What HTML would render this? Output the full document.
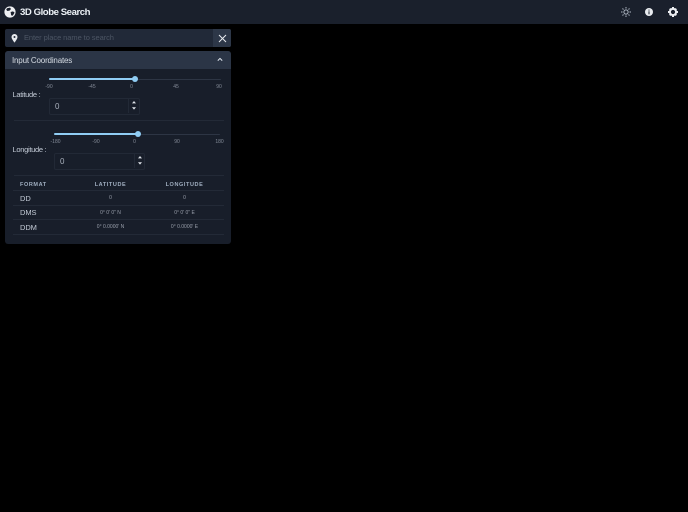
<!DOCTYPE html>
<html>
<head>
<meta charset="utf-8">
<style>
html,body{margin:0;padding:0;width:688px;height:512px;overflow:hidden;background:#000;font-family:"Liberation Sans",sans-serif;}
.a{position:absolute;white-space:nowrap;}
.sc{font-size:5px;color:#858c99;transform:translateX(-50%);line-height:6px;}
.cell{font-size:5px;color:#989eaa;transform:translateX(-50%);line-height:6px;}
.th{font-size:5.5px;color:#a0aec0;letter-spacing:.6px;line-height:7px;font-weight:bold;}
.f{font-size:7.5px;color:#c3cbd6;line-height:9px;left:20px;letter-spacing:-.1px;}
.hr{position:absolute;height:1px;background:#232a37;}
</style>
</head>
<body>
<div class="a" style="left:0;top:0;width:688px;height:24px;background:#1a202c;"></div>
<svg class="a" style="left:4px;top:6px" width="12" height="12" viewBox="0 0 12 12"><circle cx="6" cy="6" r="5.6" fill="#eef0f3"/><path d="M3 2.2 L6 1.6 L7 3 L5.6 4.6 L3.4 5 L2.2 3.8Z M6.6 6 L9 5.4 L10.6 6.6 L8.8 9.6 L7.2 9.4Z" fill="#1a202c"/></svg>
<div class="a" style="left:20px;top:6px;font-size:9.6px;line-height:13px;font-weight:bold;color:#edf2f7;letter-spacing:-.45px;">3D Globe Search</div>
<svg class="a" style="left:621px;top:7px" width="10" height="10" viewBox="0 0 10 10" fill="none" stroke="#aeb6c2" stroke-width="1"><circle cx="5" cy="5" r="2.1"/><path d="M5 0V1.5M5 8.5V10M0 5H1.5M8.5 5H10M1.5 1.5L2.5 2.5M7.5 7.5L8.5 8.5M1.5 8.5L2.5 7.5M7.5 2.5L8.5 1.5"/></svg>
<svg class="a" style="left:645px;top:8px" width="8" height="8" viewBox="0 0 8 8"><circle cx="4" cy="4" r="4" fill="#e8ebef"/><rect x="3.5" y="3.3" width="1" height="3" fill="#1a202c"/><rect x="3.5" y="1.6" width="1" height="1" fill="#1a202c"/></svg>
<svg class="a" style="left:668px;top:7px" width="10" height="10" viewBox="0 0 10 10"><circle cx="5" cy="5" r="3.1" fill="none" stroke="#eef0f3" stroke-width="2"/><path d="M5 5M4 0H6V2H4ZM4 8H6V10H4ZM0 4H2V6H0ZM8 4H10V6H8ZM1 2.4L2.4 1L3.6 2.2L2.2 3.6ZM7.6 1L9 2.4L7.8 3.6L6.4 2.2ZM1 7.6L2.2 6.4L3.6 7.8L2.4 9ZM7.8 6.4L9 7.6L7.6 9L6.4 7.8Z" fill="#eef0f3"/></svg>

<!-- search -->
<div class="a" style="left:5px;top:29px;width:226px;height:18px;background:#212938;border-radius:2px;"></div>
<div class="a" style="left:213px;top:29px;width:18px;height:18px;background:#2d3748;border-radius:0 2px 2px 0;"></div>
<svg class="a" style="left:11px;top:34px" width="7" height="9" viewBox="0 0 7 9"><path d="M3.5 0A3 3 0 0 0 .5 3C.5 5 3.5 8.6 3.5 8.6S6.5 5 6.5 3A3 3 0 0 0 3.5 0Z" fill="#e8ebef"/><circle cx="3.5" cy="3" r="1" fill="#212938"/></svg>
<div class="a" style="left:24px;top:33px;font-size:7.5px;line-height:10px;color:#4c5564;letter-spacing:-.07px;">Enter place name to search</div>
<svg class="a" style="left:218px;top:34px" width="9" height="9" viewBox="0 0 9 9"><path d="M1 1L8 8M8 1L1 8" stroke="#e8ebef" stroke-width="1"/></svg>

<!-- panel -->
<div class="a" style="left:5px;top:51px;width:226px;height:193px;background:#181e2a;border-radius:3px;"></div>
<div class="a" style="left:5px;top:51px;width:226px;height:18px;background:#2b3546;border-radius:3px 3px 0 0;"></div>
<div class="a" style="left:12px;top:55.5px;font-size:8px;line-height:10px;color:#d5dbe3;letter-spacing:-.18px;">Input Coordinates</div>
<svg class="a" style="left:217px;top:57px" width="6" height="5" viewBox="0 0 6 5"><path d="M.8 3.6L3 1.4L5.2 3.6" fill="none" stroke="#e2e8f0" stroke-width="1"/></svg>

<!-- latitude -->
<div class="a" style="left:49px;top:78.7px;width:172px;height:1.2px;background:#2d3544;border-radius:1px;"></div>
<div class="a" style="left:49px;top:78.3px;width:86px;height:2px;background:#90cdf4;border-radius:1px;"></div>
<div class="a" style="left:131.7px;top:76.3px;width:6px;height:6px;background:#90cdf4;border-radius:50%;"></div>
<div class="a sc" style="left:49px;top:84px;">-90</div>
<div class="a sc" style="left:92px;top:84px;">-45</div>
<div class="a sc" style="left:131.5px;top:84px;">0</div>
<div class="a sc" style="left:176px;top:84px;">45</div>
<div class="a sc" style="left:219px;top:84px;">90</div>
<div class="a" style="left:12.5px;top:90px;font-size:7.5px;line-height:9px;color:#c3cbd6;letter-spacing:-.3px;">Latitude :</div>
<div class="a" style="left:49px;top:98px;width:89px;height:15px;border:1px solid #222936;border-radius:2px;"></div>
<div class="a" style="left:55px;top:101.5px;font-size:8px;line-height:10px;color:#a9b0bc;">0</div>
<div class="a" style="left:128px;top:99px;width:1px;height:14px;background:#222936;"></div>
<svg class="a" style="left:131px;top:100px" width="6" height="11" viewBox="0 0 6 11"><path d="M3 1L5 3.4H1ZM3 9.6L1 7.2H5Z" fill="#dfe4ea"/></svg>
<div class="hr" style="left:14px;top:120px;width:210px;"></div>

<!-- longitude -->
<div class="a" style="left:54px;top:133.7px;width:166px;height:1.2px;background:#2d3544;border-radius:1px;"></div>
<div class="a" style="left:54px;top:133.3px;width:84px;height:2px;background:#90cdf4;border-radius:1px;"></div>
<div class="a" style="left:134.7px;top:131.3px;width:6px;height:6px;background:#90cdf4;border-radius:50%;"></div>
<div class="a sc" style="left:55.5px;top:139px;">-180</div>
<div class="a sc" style="left:96px;top:139px;">-90</div>
<div class="a sc" style="left:134.5px;top:139px;">0</div>
<div class="a sc" style="left:177px;top:139px;">90</div>
<div class="a sc" style="left:219.5px;top:139px;">180</div>
<div class="a" style="left:12.5px;top:145px;font-size:7.5px;line-height:9px;color:#c3cbd6;letter-spacing:-.3px;">Longitude :</div>
<div class="a" style="left:54px;top:153px;width:89px;height:15px;border:1px solid #222936;border-radius:2px;"></div>
<div class="a" style="left:60px;top:156.5px;font-size:8px;line-height:10px;color:#a9b0bc;">0</div>
<div class="a" style="left:134px;top:154px;width:1px;height:14px;background:#222936;"></div>
<svg class="a" style="left:137px;top:155px" width="6" height="11" viewBox="0 0 6 11"><path d="M3 1L5 3.4H1ZM3 9.6L1 7.2H5Z" fill="#dfe4ea"/></svg>
<div class="hr" style="left:14px;top:175px;width:210px;"></div>

<!-- table -->
<div class="a th" style="left:20px;top:181.5px;">FORMAT</div>
<div class="a th" style="left:110.5px;top:181.5px;transform:translateX(-50%);">LATITUDE</div>
<div class="a th" style="left:184.5px;top:181.5px;transform:translateX(-50%);">LONGITUDE</div>
<div class="hr" style="left:13px;top:190px;width:211px;"></div>
<div class="a f" style="top:193.5px;">DD</div>
<div class="a cell" style="left:110.5px;top:195px;">0</div>
<div class="a cell" style="left:184.5px;top:195px;">0</div>
<div class="hr" style="left:13px;top:205px;width:211px;"></div>
<div class="a f" style="top:208px;">DMS</div>
<div class="a cell" style="left:110.5px;top:209.5px;">0° 0' 0" N</div>
<div class="a cell" style="left:184.5px;top:209.5px;">0° 0' 0" E</div>
<div class="hr" style="left:13px;top:219px;width:211px;"></div>
<div class="a f" style="top:222.5px;">DDM</div>
<div class="a cell" style="left:110.5px;top:224px;">0° 0.0000' N</div>
<div class="a cell" style="left:184.5px;top:224px;">0° 0.0000' E</div>
<div class="hr" style="left:13px;top:234px;width:211px;"></div>
</body>
</html>
